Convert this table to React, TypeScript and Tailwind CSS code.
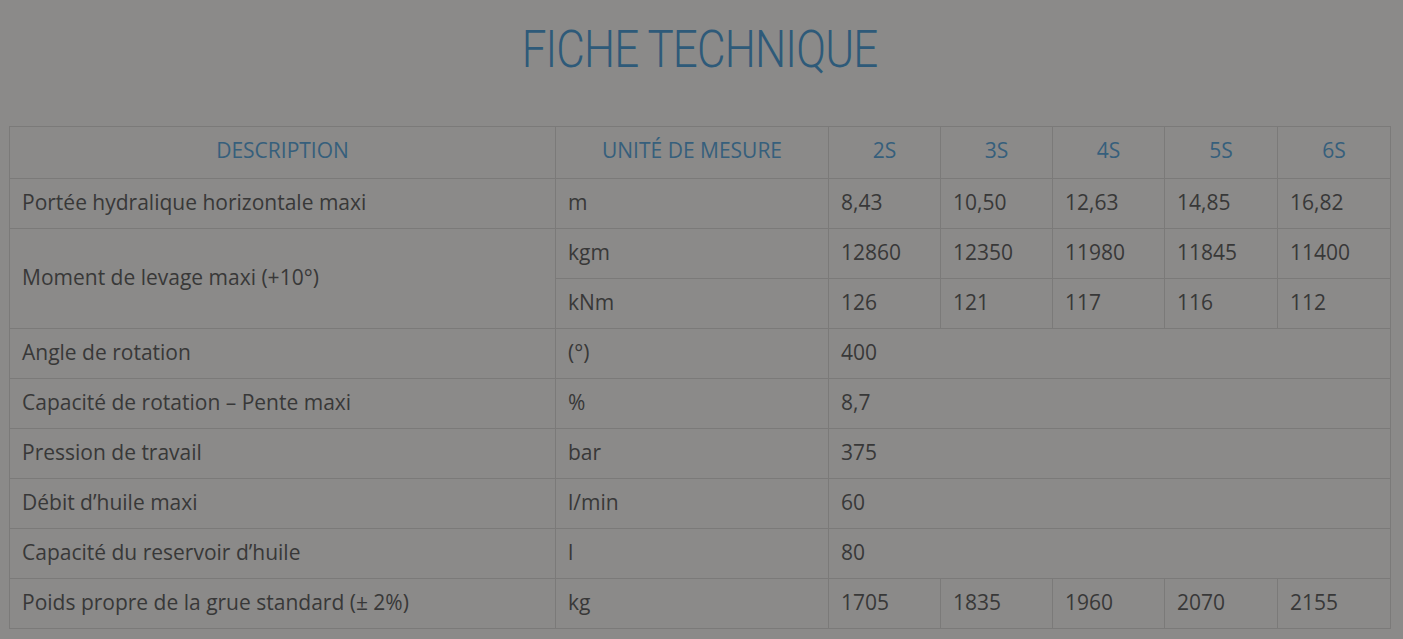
import React from 'react';

const models = ['2S', '3S', '4S', '5S', '6S'];

const td = 'border border-[#7b7a79] px-[12px] pb-[3px] h-[50px] align-middle';

const App: React.FC = () => {
  return (
    <div className="min-h-screen bg-[#8b8a89] font-['Open_Sans',sans-serif] text-[21px] leading-[28px] text-[#383838]">
      {/* Title */}
      <div className="flex justify-center pt-[20px] pr-[4px] h-[126px]">
        <h1 className="font-['Roboto',sans-serif] font-light text-[52px] leading-[60px] text-[#2e5a79] tracking-[-1px] scale-x-[0.845]">
          FICHE TECHNIQUE
        </h1>
      </div>

      {/* Table */}
      <table className="ml-[9px] w-[1382px] border-collapse table-fixed">
        <colgroup>
          <col className="w-[546px]" />
          <col className="w-[273px]" />
          <col className="w-[112px]" />
          <col className="w-[112px]" />
          <col className="w-[112px]" />
          <col className="w-[113px]" />
          <col className="w-[113px]" />
        </colgroup>
        <thead>
          <tr className="text-[#365f7c]">
            <th className={`${td} h-[52px] pb-[5px] font-normal text-center`}>DESCRIPTION</th>
            <th className={`${td} h-[52px] pb-[5px] font-normal text-center`}>UNITÉ DE MESURE</th>
            {models.map((m) => (
              <th key={m} className={`${td} h-[52px] pb-[5px] font-normal text-center`}>
                {m}
              </th>
            ))}
          </tr>
        </thead>
        <tbody>
          <tr>
            <td className={td}>Portée hydralique horizontale maxi</td>
            <td className={td}>m</td>
            {['8,43', '10,50', '12,63', '14,85', '16,82'].map((v) => (
              <td key={v} className={td}>{v}</td>
            ))}
          </tr>
          <tr>
            <td rowSpan={2} className={td}>Moment de levage maxi (+10°)</td>
            <td className={td}>kgm</td>
            {['12860', '12350', '11980', '11845', '11400'].map((v) => (
              <td key={v} className={td}>{v}</td>
            ))}
          </tr>
          <tr>
            <td className={td}>kNm</td>
            {['126', '121', '117', '116', '112'].map((v) => (
              <td key={v} className={td}>{v}</td>
            ))}
          </tr>
          <tr>
            <td className={td}>Angle de rotation</td>
            <td className={td}>(°)</td>
            <td colSpan={5} className={td}>400</td>
          </tr>
          <tr>
            <td className={td}>Capacité de rotation – Pente maxi</td>
            <td className={td}>%</td>
            <td colSpan={5} className={td}>8,7</td>
          </tr>
          <tr>
            <td className={td}>Pression de travail</td>
            <td className={td}>bar</td>
            <td colSpan={5} className={td}>375</td>
          </tr>
          <tr>
            <td className={td}>Débit d’huile maxi</td>
            <td className={td}>l/min</td>
            <td colSpan={5} className={td}>60</td>
          </tr>
          <tr>
            <td className={td}>Capacité du reservoir d’huile</td>
            <td className={td}>l</td>
            <td colSpan={5} className={td}>80</td>
          </tr>
          <tr>
            <td className={td}>Poids propre de la grue standard (± 2%)</td>
            <td className={td}>kg</td>
            {['1705', '1835', '1960', '2070', '2155'].map((v) => (
              <td key={v} className={td}>{v}</td>
            ))}
          </tr>
        </tbody>
      </table>
    </div>
  );
};

export default App;
